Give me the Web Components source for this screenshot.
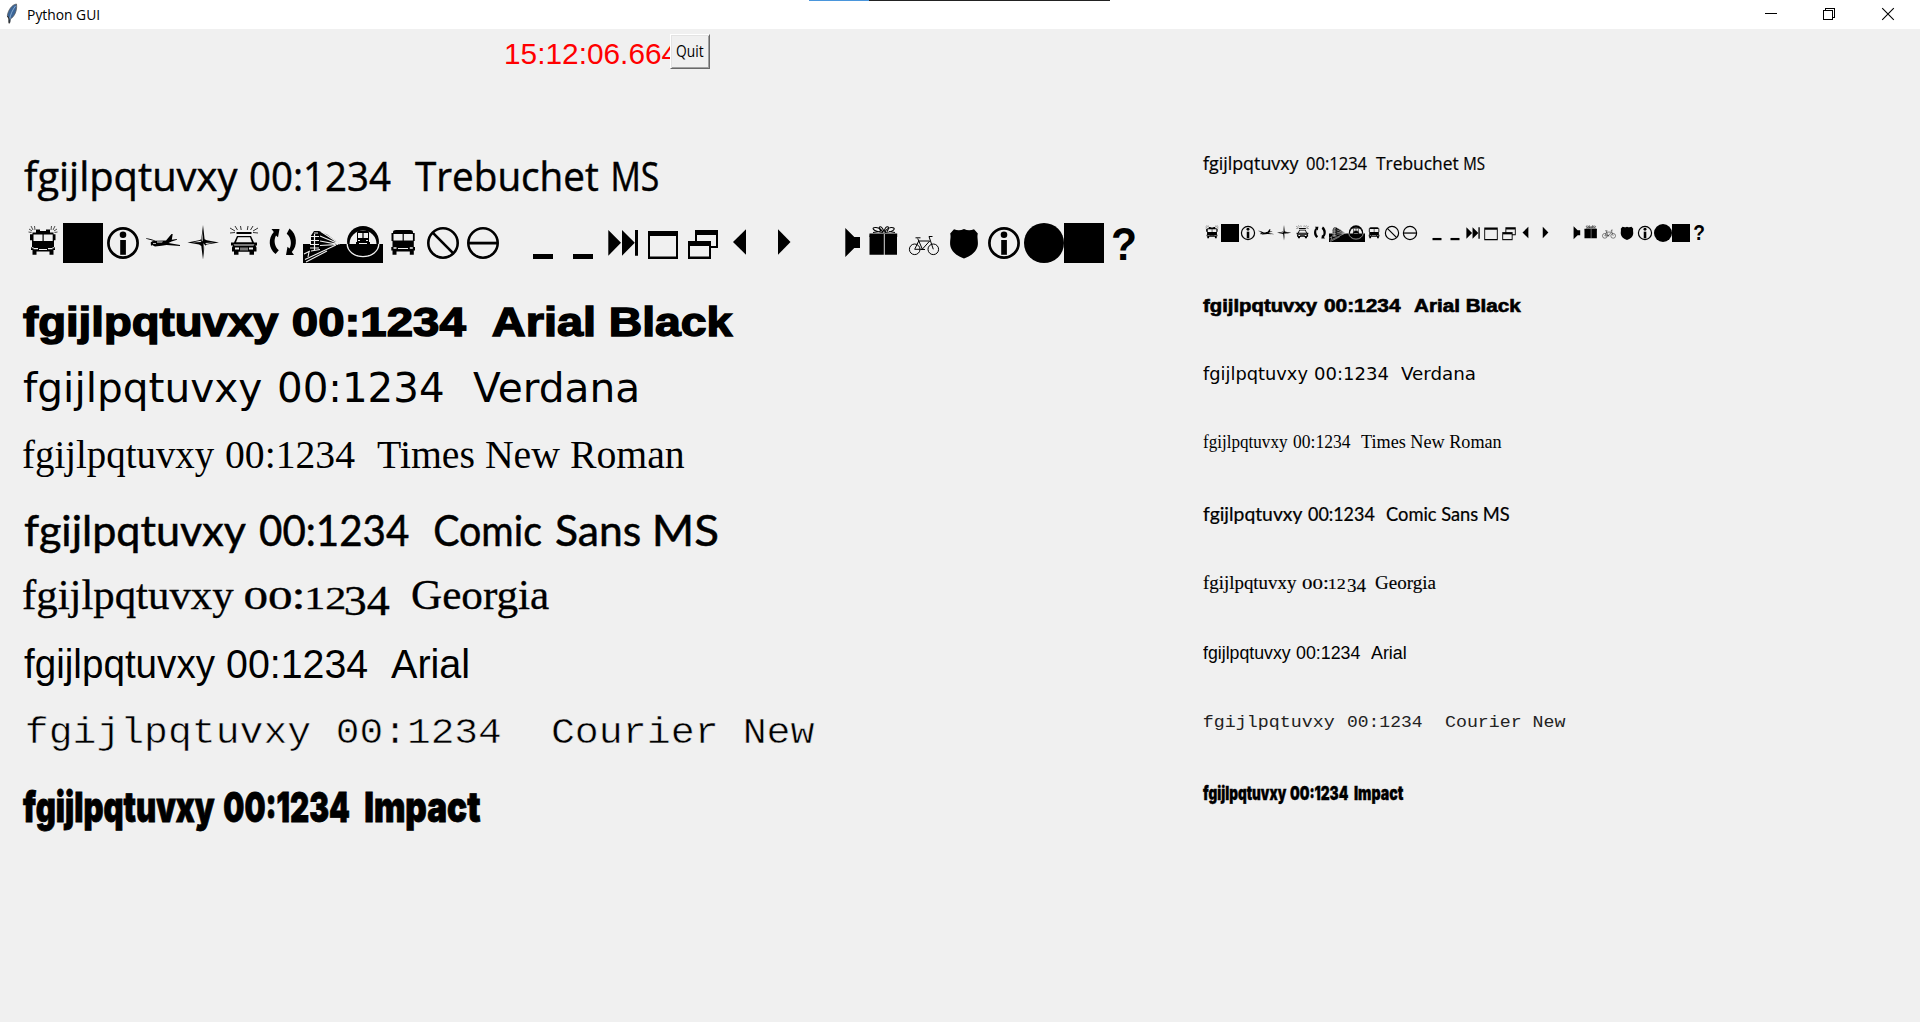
<!DOCTYPE html>
<html lang="en">
<head>
<meta charset="utf-8">
<title>Python GUI</title>
<style>
html,body{margin:0;height:100%;background:#f0f0f0;overflow:hidden}
</style>
</head>
<body>
<tk-window></tk-window>
<script>
const ctx = document.createElement('canvas').getContext('2d');

/* Word stretched so that its ink spans exactly `w` pixels. */
class FitText extends HTMLElement {
  connectedCallback() {
    const w = +this.getAttribute('w'), gap = +this.getAttribute('gap') || 0;
    const root = this.attachShadow({mode: 'open'});
    root.innerHTML = `<style>:host{display:block;flex:none;width:${w}px;margin-left:${gap}px;line-height:0}
      :host([small]){font-size:.735em;-webkit-text-stroke:.01em #000}
      span{display:inline-block;white-space:pre;transform-origin:0 0}</style><span></span>`;
    const t = root.querySelector('span');
    const text = t.textContent = this.getAttribute('text');
    const cs = getComputedStyle(this);
    ctx.font = `${cs.fontWeight} ${cs.fontSize} ${cs.fontFamily}`;
    const m = ctx.measureText(text.trim());
    const left = m.actualBoundingBoxLeft;
    const k = w / (left + m.actualBoundingBoxRight);
    const dy = this.hasAttribute('drop') ? parseFloat(cs.fontSize) * .155 : 0;
    t.style.transform = `translate(${left * k}px,${dy}px) scaleX(${k})`;
  }
}
customElements.define('fit-text', FitText);

const FACES = {
  trebuchet: ['"Open Sans"', 400, 1, '.012em #000'],
  black: ['"Liberation Sans"', 700, 1.01, '.035em #000'],
  verdana: ['"DejaVu Sans"', 400, 1, ''],
  times: ['"Liberation Serif"', 400, 1, ''],
  comic: ['Lato', 400, 1.05, '.012em #000'],
  georgia: ['"Liberation Serif"', 400, 1.045, '.008em #000'],
  arial: ['"Liberation Sans"', 400, 1, ''],
  courier: ['"Liberation Mono"', 400, .9, '.014em #f0f0f0'],
  impact: ['Inter', 900, 1.04, '.02em #000']
};

/* One sample line; its bottom edge is the text baseline. */
class FontSample extends HTMLElement {
  connectedCallback() {
    const face = this.getAttribute('face');
    let [fam, wt, mul, stroke] = FACES[face];
    const size = +this.getAttribute('size') * mul;
    if (face === 'courier' && size < 20) stroke = '';
    const h = this.getAttribute('rise');
    let x = +this.getAttribute('origin');
    const parts = JSON.parse(this.getAttribute('parts')).map(([s, a, b, kind]) => {
      const gap = a - x; x = b;
      return `<fit-text text="${s}" gap="${gap}" w="${b - a}" ${kind || ''}></fit-text>`;
    }).join('');
    this.attachShadow({mode: 'open'}).innerHTML = `<style>
      :host{display:flex;align-items:baseline;height:${h}px;line-height:0;color:${face === 'courier' && size < 20 ? '#222' : '#000'};font-family:${fam},sans-serif;
        font-weight:${wt};font-size:${size}px;${stroke ? '-webkit-text-stroke:' + stroke : ''}}
      i{flex:none;width:0;height:${h}px}</style><i></i>${parts}`;
  }
}
customElements.define('font-sample', FontSample);

const info = '<circle cx="20" cy="20" r="14.6" fill="none" stroke="#000" stroke-width="2.7"/><circle cx="20" cy="11.8" r="3.3"/><path d="M17.2 17h5.7v14.8h-5.7z"/>';
const square = '<path d="M0 0h40v40H0z"/>';
const dash = '<path d="M10 31h20v5H10z"/>';
const ring = '<circle cx="20" cy="20" r="14.7" fill="none" stroke="#000" stroke-width="2.6"/>';
const W = 'fill="#f0f0f0"', L = 'fill="none" stroke="#000"', LW = 'fill="none" stroke="#f0f0f0"';
const GLYPHS = {
  fire: `<path ${L} stroke-width=".7" d="M6 6l3 2M8 3l2 4M11.500 3l.5 4M5.500 9l3 .5M34 6l-3 2M32 3l-2 4M28.500 3l-.5 4M34.500 9l-3 .5"/>
    <path d="M13 6.500h4V8h6V6.500h4v3h3.500v1.700h2v6H31V24h1v3h-1.500v4.800h-4V28.500h-13v3.300h-4V27H8v-3h1v-6.800H7v-6h2.500V9.500H13z"/><path ${W} d="M10.500 11.500h9v6.500h-9zM20.700 11.500h9v6.500h-9zM10.500 25h4.500v1.300h-4.500zM25 25h4.500v1.300H25zM8.500 24.200h2v1h-2zM29.500 24.200h2v1h-2zM16 26h8v.9h-8z"/>`,
  square, info,
  plane: `<path d="M3 15.200c3 .2 6 1 9.500 2.500l10.500-.2L28.500 11h1.200l-.9 5.800 5-.9.2.9-5.500 1.800-3 1.500L37 22v1l-13.500-1-5 .8-6.500.8-3-1.500-1 1-.3-3.500 1.500-1.300 2-.2-8.200-2.300z"/><path ${W} d="M14 18.600h6l-1 .9h-5zM10 20h3v.8h-3z"/>`,
  star: `<path d="M20 2l1.600 14.200 2.200 1L36 19.500l-12.200 2-2.200 1.500L20 36.500 18.300 23l-2.200-1.500L4.500 19.500l11.600-2.300 2.200-1z"/><path ${W} d="M19.600 8v10.500l-1-1.200zM20.500 20.200l.4 9.500 1.200-7.500zM9 19.400l8.500-1.600 1 1.300zM22 20l9-.5-7.500 1.500z"/>`,
  police: `<path ${L} stroke-width=".8" d="M7 5l5 3M12 3l2.500 4M17.500 3l.7 4M25 3l-.7 4M30 3l-2.500 4M35 5l-5 3M7 10l5-.5M35 10l-5-.5"/><path d="M13.500 9h15v2h-15zM14 13h14l3 6.500h3v3h-1.500l1 2v4H31v3.300h-4.500v-3h-11v3H11v-3.300H9v-4l1-2H8v-3h3z"/><path ${W} d="M15 14.300h12l2 5H13zM10.500 21.500h21l-1 1h-19zM12 24.500h4v2h-4zM26 24.500h4v2h-4zM17 24.800h8v.6h-8zM17 26.600h8v.6h-8z"/>`,
  cycle: `<path d="M8.500 6h8L15 14.300l-2-1.900c-2.400 4-1.800 11 2.800 14.800L12.500 31C5.300 25.500 5 15 10.800 9zM31 32h-8l1.500-8.300 2 1.900c2.400-4 1.800-11-2.800-14.800L26.500 5.500C34.500 11.500 34.800 23 28.800 29z"/>`,
  train: `<path d="M0 21h8V12.500L11 8h5l8 3.500L37 21h3v19H0z"/><path ${LW} stroke-width="1.200" d="M8 13.500h8M7 17.500h9M7 21.500h9M7 25h9M18 8.500L37 21M17 13l19 8M17 18l18 3.300M17 22.500l15-.8M11 10l4 0M11.500 11v16"/><path ${LW} stroke-width="1.100" d="M2 36.500L33 22M1 31l6-3M8 28l9-1.500M3 39L24 28M6 29l-1 5"/>`,
  subway: `<path d="M0 21h40v19H0z"/><circle cx="20" cy="18.800" r="15.900"/><path ${W} d="M6.500 21a13.500 13.500 0 1 1 27 0z"/><path ${LW} stroke-width="1.300" d="M4.200 21a15.800 12.600 0 0 0 31.600 0"/><path d="M14 9.500q0-1.700 2-1.700h8q2 0 2 1.700V19h1v2.800h-3V20h-8v1.800h-3V19h1z"/><path ${W} d="M15 10h4.400v5H15zM20.600 10H25v5h-4.400zM15 17h2v1h-2zM23 17h2v1h-2z"/>`,
  bus: `<path d="M10 9q0-2 3-2h14q3 0 3 2v1h1.700v8H30.800v6H32v3.500h-1.200v4.300h-4V28.500H13.500v3.300h-4v-4.300H8.300V24h1.200v-6H8.500v-8H10z"/><path ${W} d="M10.500 11h9.100v6.500h-9.100zM20.800 11h9.100v6.500h-9.100zM10.500 24.300h3v1.500h-3zM26.800 24.300h3v1.500h-3zM15 25h10v1H15z"/>`,
  no: ring + `<path ${L} stroke-width="2.600" d="M9.700 9.700l20.600 20.600"/>`,
  minus: ring + '<path d="M5 18.700h30v2.800H5z"/>',
  dash,
  next: '<path d="M5.300 7L18 19.800 5.300 32.800zM19 7l12.800 12.800L19 32.800zM32 7h3v25.800h-3z"/>',
  maximize: '<path fill-rule="evenodd" d="M5 8h30v28H5zM7 13h26v20.500H7z"/>',
  restore: `<path fill-rule="evenodd" d="M12 7h23v18H12zM14 12h19v11H14z"/><path d="M5 18h23v18H5z"/><path ${W} d="M7 23h19v10.500H7z"/>`,
  left: '<path d="M10 19L23 6.300v25.400z"/>',
  right: '<path d="M15 6.300L27.500 19 15 31.700z"/>',
  speaker: '<path d="M21.300 5l9 9H36v11h-5.700l-9 9z"/>',
  gift: `<path d="M5.500 10.500h27.700V14H33v17.800H5.500V14h-.3z"/><path ${LW} stroke-width=".9" d="M20.300 11v21"/><path ${L} stroke-width="1.100" d="M19 9.500C8 8.500 7 4 12 4.500s7 5 7 5M21 9.500C32 8.500 32 4 27 4.500s-6 5-6 5M17 8.500C13 3 17 1.500 20 8.500c2-7 7-5.500 3 0M9 9.500l7-1M25 8.500l6 1"/>`,
  bike: `<g ${L} stroke-width="1"><circle cx="10.700" cy="26.300" r="5.300"/><circle cx="29.300" cy="26.300" r="5.300"/><path d="M10.700 26.300l4-8.300h11l-7.500 8.300zM13.700 15.500l4.800 11M29.300 26.300L25 13.500h3.500M11.500 14.800h5M17 26.500h4"/></g>`,
  shield: '<path d="M10 6.200q5 2.300 10-.2 5 2.500 10 .2l3.800 4.300c-1 4 .5 6.500 0 11.500-.8 6.500-6.500 11-13.800 13.500C12.700 33 7 28.500 6.200 22c-.5-5 1-7.500 0-11.500z"/>',
  circle: '<circle cx="20" cy="20" r="20"/>',
  help: '<text x="7" y="36.500" font-family="Liberation Sans" font-weight="700" font-size="47" textLength="26" lengthAdjust="spacingAndGlyphs">?</text>'
};

/* Row of pictographs, 40 units per cell; "-" and "=" are half-width spaces. */
class GlyphRow extends HTMLElement {
  connectedCallback() {
    const c = +this.getAttribute('cell');
    const names = 'fire square info plane star police cycle train subway bus no minus - dash dash next maximize restore left right = speaker gift bike shield info circle square help'.split(' ');
    this.attachShadow({mode: 'open'}).innerHTML = `<style>
      :host{display:flex;height:${c}px;padding-top:${this.getAttribute('space')}px}
      svg{flex:none;width:${c}px;height:${c}px;overflow:visible} i{flex:none;width:${c * .5}px} i.w{width:${c * .5 + 1}px}</style>` +
      names.map(n => n === '-' ? '<i></i>' : n === '=' ? '<i class="w"></i>' : `<svg viewBox="0 0 40 40">${GLYPHS[n]}</svg>`).join('');
  }
}
customElements.define('glyph-row', GlyphRow);

class TitleBar extends HTMLElement {
  connectedCallback() {
    this.attachShadow({mode: 'open'}).innerHTML = `<style>
      :host{display:flex;height:29px;background:#fff;position:relative;font:15px/0 "Open Sans",sans-serif;color:#000}
      .f{flex:none;width:16px;height:22px;margin:3px 0 0 4px}
      .n{display:flex;align-items:baseline;height:20px;margin-left:7.500px}.n i{height:20px;width:0}
      .c{margin-left:auto;width:200px;height:29px}
      .e{position:absolute;left:809px;top:0;width:301px;height:1px;background:linear-gradient(90deg,#4a96dc 60px,#222 60px)}</style>
      <svg class="f" viewBox="0 0 16 22"><path d="M12.500 1C8 1.500 4 7 3.300 13l1.500 2.500v4h1.200l.5-3.500C10 14 13.500 8 12.500 1z" fill="#3b6597" stroke="#555" stroke-width=".7"/><path d="M11.500 3C8.500 7 6.500 11 5.500 17" fill="none" stroke="#91b3d8" stroke-width=".9"/><path d="M3.500 13l1.700 3v4.500" fill="none" stroke="#222" stroke-width="1"/></svg>
      <div class="n"><i></i><fit-text text="Python GUI" w="71"></fit-text></div>
      <svg class="c" viewBox="0 0 200 29" fill="none" stroke="#000"><path shape-rendering="crispEdges" d="M45 13.500h12M103.500 10.500h9v9h-9zM105.500 10V8.500h9v9H113"/><path d="M162.200 8.200l11.600 11.600M173.800 8.200l-11.600 11.600" stroke-width="1.100"/></svg><div class="e"></div>`;
  }
}
customElements.define('title-bar', TitleBar);

class TkButton extends HTMLElement {
  connectedCallback() {
    this.attachShadow({mode: 'open'}).innerHTML = `<style>
      :host{display:flex;align-items:baseline;box-sizing:border-box;width:40px;height:35px;background:#f0f0f0;position:relative;
        border:1px solid;border-color:#fff #696969 #696969 #fff;box-shadow:inset 1px 1px #e3e3e3,inset -1px -1px #a0a0a0;font:15.500px/0 "Open Sans",sans-serif;color:#000}
      i{width:0;height:22px}</style><i></i><fit-text text="Quit" gap="4.900" w="28"></fit-text>`;
  }
}
customElements.define('tk-button', TkButton);

class TkWindow extends HTMLElement {
  connectedCallback() {
    const P = 'fgijlpqtuvxy ', N = '00:1234  ';
    const row = (face, rise, v, names, size, origin) => {
      const parts = [[P, v[0], v[1]]];
      if (face === 'georgia') {
        const k = (v[3] - v[2]) / 145, q = d => v[2] + d * k;
        parts.push(['00', v[2], q(47), 'small'], [':', q(50.5), q(58)], ['12', q(62), q(99.5), 'small'], ['34  ', q(101), v[3], 'drop']);
      } else parts.push([N, v[2], v[3]]);
      names.forEach((n, i) => parts.push([n, v[4 + 2 * i], v[5 + 2 * i]]));
      return `<font-sample face="${face}" rise="${rise}" size="${size}" origin="${origin}" parts='${JSON.stringify(parts)}'></font-sample>`;
    };
    const l = (f, r, v, ...n) => row(f, r, v, n, 40, 23);
    const s = (f, r, v, ...n) => row(f, r, v, n, 18, 1203);
    this.attachShadow({mode: 'open'}).innerHTML = `<style>
      :host{display:flex;flex-direction:column;width:1920px;height:1022px;background:#f0f0f0}
      .top{display:flex;height:61px;padding-left:504px}
      .clock{display:flex;align-items:baseline;width:166px;height:35px;color:#f00;font:30px/0 "Liberation Sans",sans-serif}
      .clock i{height:35px;width:0} tk-button{margin-top:5px}
      main{display:grid;grid-template-columns:1180px 1fr;padding-left:23px}
      section{display:flex;flex-direction:column}</style>
      <title-bar></title-bar>
      <div class="top"><div class="clock"><i></i><fit-text text="15:12:06.664" gap="1.500" w="171.500"></fit-text></div><tk-button></tk-button></div>
      <main><section>
      ${l('trebuchet', 101, [23.7, 238, 251, 391, 415, 598.5, 613, 658.5], 'Trebuchet ', 'MS')}
      <glyph-row cell="40" space="32"></glyph-row>
      ${l('black', 73, [23, 279, 293, 466.5, 493, 593.5, 610.5, 732.5], 'Arial ', 'Black')}
      ${l('verdana', 66, [22.8, 261.5, 278.8, 443, 473.5, 637], 'Verdana')}
      ${l('times', 66, [23.3, 214.5, 226, 355, 377, 684.7], 'Times New Roman')}
      ${l('comic', 78, [23.8, 246, 260.500, 409.5, 435, 541, 556.5, 640.5, 655, 717], 'Comic ', 'Sans ', 'MS')}
      ${l('georgia', 63, [23.3, 234, 245, 390, 412, 548.7], 'Georgia')}
      ${l('arial', 69, [23.500, 214.5, 227, 368, 391, 468.3], 'Arial')}
      ${l('courier', 65, [26.5, 310, 338, 500, 552, 815], 'Courier New')}
      ${l('impact', 79, [23, 215, 224, 349, 364.5, 479.5], 'Impact')}
      </section><section>
      ${s('trebuchet', 80, [1203, 1299.5, 1305.5, 1366.3, 1376.3, 1458.6, 1464.5, 1485.5], 'Trebuchet ', 'MS')}
      <glyph-row cell="18" space="54"></glyph-row>
      ${s('black', 70, [1203, 1318, 1324.3, 1401.8, 1413.8, 1521.6], 'Arial Black')}
      ${s('verdana', 68, [1203, 1308.3, 1315.3, 1388.7, 1401, 1475], 'Verdana')}
      ${s('times', 68, [1203, 1287.5, 1293.3, 1350.7, 1361.3, 1502], 'Times New Roman')}
      ${s('comic', 73, [1203, 1302.7, 1308.5, 1375.3, 1386, 1509.5], 'Comic Sans MS')}
      ${s('georgia', 68, [1203, 1297, 1301.7, 1366.7, 1375.3, 1437], 'Georgia')}
      ${s('arial', 70, [1203, 1290.7, 1296.3, 1360.7, 1371, 1405.7], 'Arial')}
      ${s('courier', 68, [1204, 1335, 1347, 1421.7, 1445.3, 1566], 'Courier New')}
      ${s('impact', 73, [1202.7, 1286, 1289.7, 1348, 1354.3, 1404], 'Impact')}
      </section></main>`;
  }
}
customElements.define('tk-window', TkWindow);
</script>
</body>
</html>
